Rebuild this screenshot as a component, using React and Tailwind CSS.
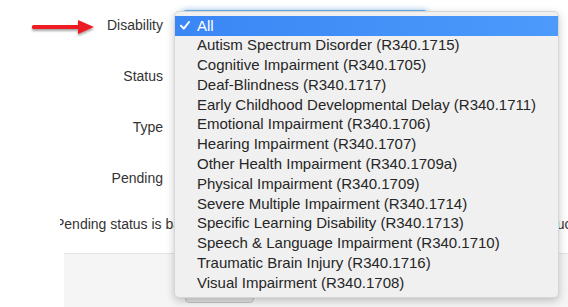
import React from "react";

const options = [
  "Autism Spectrum Disorder (R340.1715)",
  "Cognitive Impairment (R340.1705)",
  "Deaf-Blindness (R340.1717)",
  "Early Childhood Developmental Delay (R340.1711)",
  "Emotional Impairment (R340.1706)",
  "Hearing Impairment (R340.1707)",
  "Other Health Impairment (R340.1709a)",
  "Physical Impairment (R340.1709)",
  "Severe Multiple Impairment (R340.1714)",
  "Specific Learning Disability (R340.1713)",
  "Speech & Language Impairment (R340.1710)",
  "Traumatic Brain Injury (R340.1716)",
  "Visual Impairment (R340.1708)",
];

function Field({ label, focused }) {
  return (
    <div className="flex h-[51px] items-center">
      <label className="w-[163px] text-right text-[14px] text-[#333]">{label}</label>
      <div
        className={
          "ml-[19px] h-[32px] w-[246px] rounded-[4px] border bg-white " +
          (focused
            ? "border-[#66afe9] shadow-[0_0_6px_rgba(102,175,233,0.6)]"
            : "border-[#ccc]")
        }
      ></div>
    </div>
  );
}

function Arrow() {
  return (
    <svg
      className="absolute left-[30px] top-[18px]"
      width="68"
      height="20"
      viewBox="0 0 68 20"
    >
      <defs>
        <filter id="sh" x="-20%" y="-50%" width="140%" height="200%">
          <feDropShadow dx="0" dy="2" stdDeviation="1.2" floodColor="#000" floodOpacity="0.35" />
        </filter>
      </defs>
      <g filter="url(#sh)">
        <rect x="2" y="7" width="48" height="4" rx="1.5" fill="#ec1c24" />
        <polygon points="48,2 64,9 48,16" fill="#ec1c24" />
      </g>
    </svg>
  );
}

function Dropdown() {
  return (
    <div className="absolute left-[174px] top-[11px] w-[385px] rounded-[5px] border border-[#d6d6d6] bg-[#f0f0f0] py-[4px] text-[15px] shadow-[0_3px_8px_rgba(0,0,0,0.22)]">
      <div className="relative flex h-[19.77px] items-center bg-gradient-to-r from-[#3a86f5] to-[#4c9afb] pl-[22px] text-white">
        <svg className="absolute left-[5px] top-[5px]" width="10" height="9" viewBox="0 0 10 9">
          <path d="M1 4.8 L3.8 7.6 L9 1" fill="none" stroke="#fff" strokeWidth="2" strokeLinecap="round" strokeLinejoin="round" />
        </svg>
        All
      </div>
      {options.map((o) => (
        <div key={o} className="flex h-[19.77px] items-center pl-[22px] text-[#262626]">
          {o}
        </div>
      ))}
    </div>
  );
}

export default function App() {
  return (
    <div
      className="relative h-[307px] w-[568px] overflow-hidden bg-white text-[14px]"
      style={{ fontFamily: '"Liberation Sans", Arial, sans-serif' }}
    >
      <Field label="Disability" focused />
      <Field label="Status" />
      <Field label="Type" />
      <Field label="Pending" />
      <div className="ml-[60px] mt-[10px] h-[20px] overflow-hidden whitespace-nowrap leading-[20px] text-[#333]">
        <span className="-ml-[5px] inline-block">
          Pending status is based on the most recent IEP that has not been finalized for education plans.
        </span>
      </div>
      <div className="ml-[64px] mt-[19px] h-[60px] border-t border-[#e3e3e3] bg-[#f5f5f5] pl-[121px] pt-[16px]">
        <div className="h-[33px] w-[69px] rounded-[4px] border border-[#c4c4c4] bg-[#e4e4e4]"></div>
      </div>
      <Arrow />
      <Dropdown />
    </div>
  );
}
